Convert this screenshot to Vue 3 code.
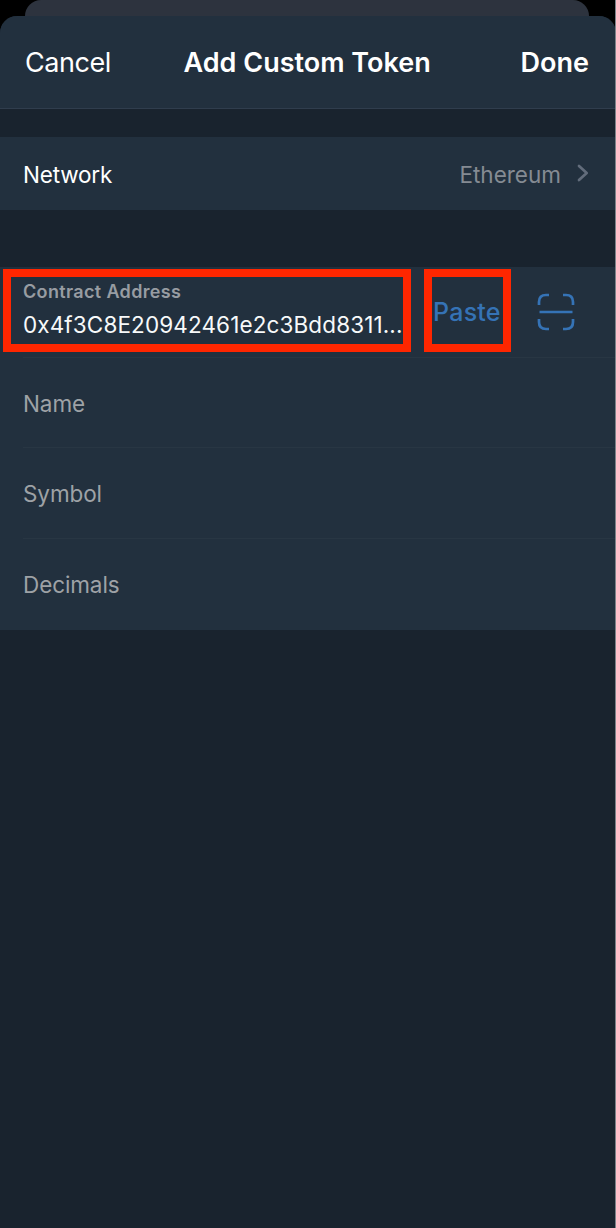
<script setup>
const fields = [
  { key: 'name', label: 'Name' },
  { key: 'symbol', label: 'Symbol' },
  { key: 'decimals', label: 'Decimals' },
]
</script>

<template>
  <div class="screen">
    <div class="behind"></div>
    <div class="sheet">
      <header class="bar">
        <span class="cancel">Cancel</span>
        <span class="title">Add Custom Token</span>
        <span class="done">Done</span>
      </header>

      <section class="network">
        <span class="network-label">Network</span>
        <span class="network-value">Ethereum</span>
        <svg class="chevron" width="12" height="18" viewBox="0 0 12 18">
          <path d="M2 2 L9.7 9 L2 16" />
        </svg>
      </section>

      <section class="form">
        <div class="row contract">
          <div class="address">
            <span class="caption">Contract Address</span>
            <span class="value">0x4f3C8E20942461e2c3Bdd8311...</span>
          </div>
          <span class="paste">Paste</span>
          <svg class="scan" width="38" height="38" viewBox="0 0 38 38">
            <path d="M2 12 V9 Q2 2 9 2 H12 M26 2 H29 Q36 2 36 9 V12 M2 26 V29 Q2 36 9 36 H12 M26 36 H29 Q36 36 36 29 V26 M2.5 19 H35.5" />
          </svg>
          <i class="mark mark-address"></i>
          <i class="mark mark-paste"></i>
        </div>
        <div v-for="f in fields" :key="f.key" class="row">
          <span class="placeholder">{{ f.label }}</span>
        </div>
      </section>
    </div>
    <div class="edge"></div>
  </div>
</template>

<style>
body {
  margin: 0;
  background: #000;
}
</style>

<style scoped>
.screen {
  position: relative;
  width: 616px;
  height: 1228px;
  overflow: hidden;
  background: #000;
  font-family: Inter, "Liberation Sans", sans-serif;
  font-size: 22.5px;
  line-height: 28px;
  white-space: nowrap;
}
.behind {
  height: 16px;
  margin: 0 27px 0 25px;
  border-radius: 16px 16px 0 0;
  background: #2d333e;
}
.sheet {
  height: 1212px;
  border-radius: 17px 17px 0 0;
  overflow: hidden;
  background: #19232e;
}
.bar {
  display: grid;
  grid-template-columns: 159px 1fr auto;
  align-items: center;
  box-sizing: border-box;
  height: 93px;
  padding: 2px 27px 0 25px;
  border-bottom: 1px solid #303d4d;
  background: #22303e;
  color: #fff;
  font-size: 27px;
}
.cancel {
  letter-spacing: -0.45px;
}
.title,
.done {
  font-weight: 600;
}
.title {
  margin-left: -0.5px;
}
.network {
  display: flex;
  align-items: center;
  box-sizing: border-box;
  height: 73px;
  margin-top: 28px;
  padding: 2px 27px 0 23px;
  background: #22303e;
  color: #fff;
}
.network-label {
  letter-spacing: -0.2px;
}
.network-value {
  margin-left: auto;
  color: #858b93;
}
.chevron {
  margin: 0 0 3px 16px;
}
.chevron path {
  fill: none;
  stroke: #626c7b;
  stroke-width: 2.7;
  stroke-linecap: round;
  stroke-linejoin: round;
}
.form {
  height: 363px;
  margin-top: 57px;
  background: #22303e;
}
.row {
  position: relative;
  display: flex;
  align-items: center;
  box-sizing: border-box;
  height: 90.5px;
  padding-left: 23px;
  color: #9ea2a6;
}
.row:not(:last-child)::after {
  content: "";
  position: absolute;
  right: 0;
  bottom: 0;
  left: 23px;
  height: 1px;
  background: #283643;
}
.placeholder {
  padding-top: 2px;
  letter-spacing: -0.1px;
}
.address {
  display: flex;
  flex-direction: column;
  width: 410px;
}
.caption {
  font-size: 18px;
  font-weight: 600;
  line-height: 24px;
  letter-spacing: 0.35px;
  color: #979ca2;
  margin-top: -5px;
}
.value {
  margin-top: 7px;
  letter-spacing: 0.12px;
  color: #f7f9fa;
}
.paste {
  width: 104px;
  font-size: 25px;
  font-weight: 500;
  letter-spacing: 0.25px;
  color: #3573b6;
}
.scan path {
  fill: none;
  stroke: #3573b6;
  stroke-width: 2.7;
}
.mark {
  position: absolute;
  top: 2px;
  box-sizing: border-box;
  height: 83px;
  border: 8px solid #ff2600;
}
.mark-address {
  left: 3px;
  width: 408px;
}
.mark-paste {
  left: 424px;
  width: 87px;
}
.edge {
  position: absolute;
  top: 0;
  right: 0;
  width: 1px;
  height: 1228px;
  background: #7c8389;
}
</style>
